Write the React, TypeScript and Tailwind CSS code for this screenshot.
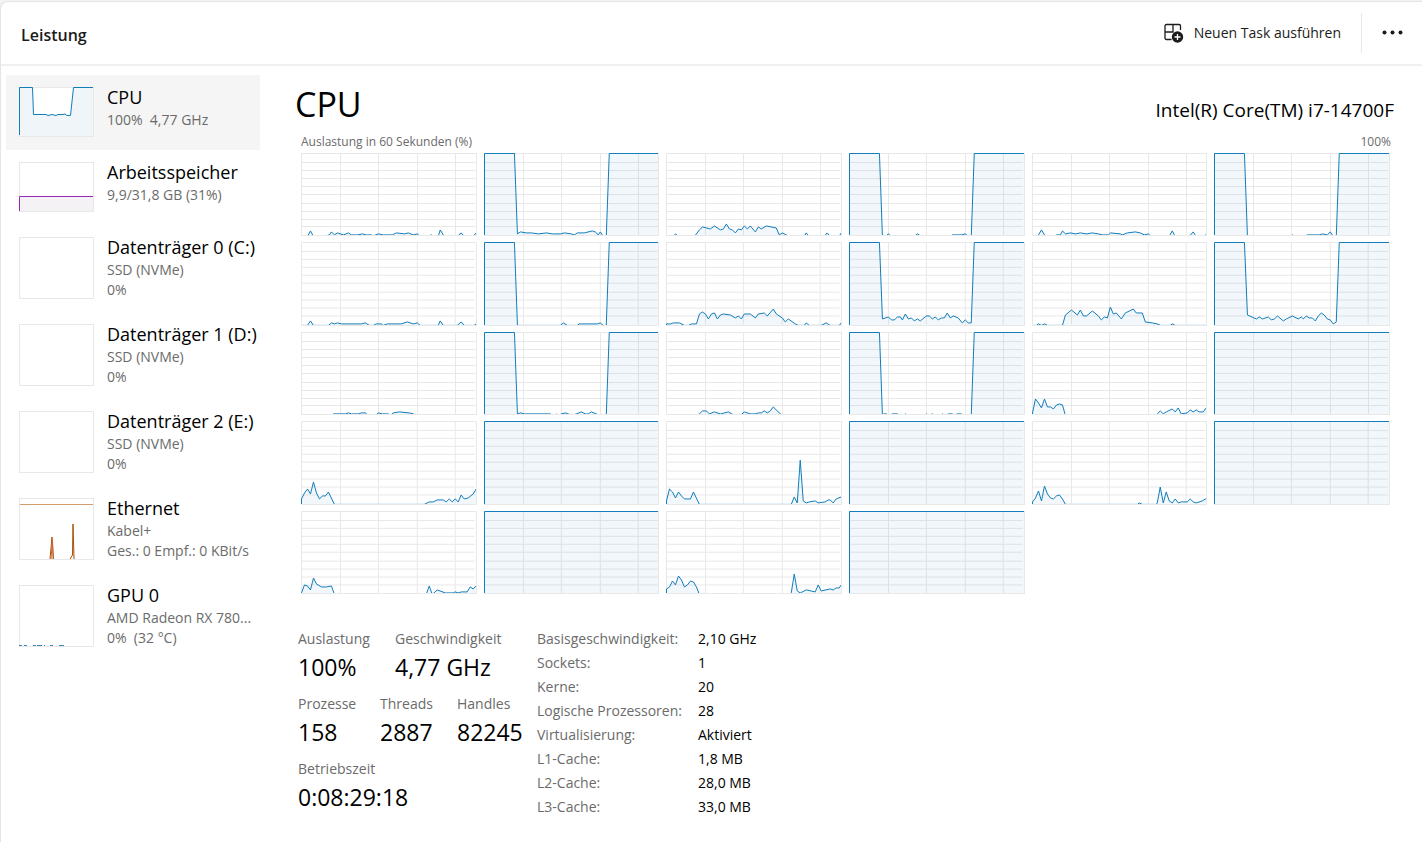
import clsx from "clsx";

// Each trace is a list of "x,height" pairs inside a 175 x 83 plot area
const FULL = "0,83 175,83";

const CORES = [
  "0,0 6,0 9,5 12,0 24,0 27,1 28,1 30,4 33,1 36,3 42,1 47,3 50,1 56,1 61,2 65,1 70,1 72,0 74,1 77,2 82,1 91,1 95,3 103,2 107,3 112,1 116,2 119,0 127,0 130,1 133,0 137,0 139,6 143,0 156,0 160,3 163,0 172,0 175,3",
  "0,83 30,83 33,2 36,4 42,3 47,3 54,2 62,3 68,2 76,2 80,3 87,2 90,1 93,3 100,3 108,5 111,4 114,1 116,4 119,0 122,0 125,83 175,83",
  "0,0 7,0 9,2 12,0 28,0 33,6 36,9 44,7 48,10 54,6 57,7 60,12 63,7 66,6 69,3 72,7 75,6 78,10 81,7 84,10 89,4 92,9 95,7 100,10 110,8 113,1 116,3 120,1 122,0 138,0 140,3 143,0 158,0 161,3 164,0 173,0 175,3",
  "0,83 30,83 33,0 36,0 39,2 42,0 65,0 68,2 72,0 101,0 103,1 112,1 116,2 119,0 122,0 125,83 175,83",
  "0,0 4,0 6,1 9,6 12,1 14,0 22,0 24,1 28,1 30,5 33,2 38,3 43,2 48,3 54,2 60,3 66,2 70,1 76,1 78,3 88,2 90,1 95,3 103,4 108,3 112,1 116,2 119,0 137,0 140,5 143,0 157,0 161,4 164,0 173,0 175,4",
  "0,83 30,83 33,0 76,0 78,1 81,0 90,0 93,1 105,1 108,2 113,1 116,4 119,0 122,0 125,83 175,83",

  "0,0 6,0 9,4 12,0 27,0 30,2 33,1 36,2 40,1 60,1 64,2 68,0 72,0 75,1 80,1 82,0 86,1 100,1 106,3 112,1 116,2 119,0 137,0 139,4 142,0 156,0 160,3 163,0 173,0 175,1",
  "0,83 30,83 33,0 76,0 79,2 83,0 93,0 95,1 113,1 116,2 119,0 122,0 125,83 175,83",
  "0,1 4,1 7,2 13,2 18,0 22,0 25,1 30,1 33,11 36,13 39,11 42,6 45,11 48,12 51,6 54,10 57,11 64,10 69,7 72,9 75,6 78,11 84,11 89,7 92,11 98,12 101,9 107,16 110,11 116,7 119,3 122,6 129,1 132,0 138,0 140,2 143,0 155,0 160,2 164,0 173,0 175,2",
  "0,83 30,83 33,6 39,8 42,5 45,5 48,8 51,8 53,5 56,11 59,6 62,7 65,4 68,6 71,4 77,9 80,9 83,6 86,8 89,5 92,7 95,7 98,12 101,7 104,9 109,7 113,2 116,5 119,2 122,2 125,83 175,83",
  "0,0 4,0 6,1 9,0 12,1 15,0 30,0 33,10 39,15 45,10 48,15 51,9 54,9 60,14 66,9 69,5 72,8 75,7 78,18 81,11 84,12 89,6 93,12 101,16 104,12 110,12 113,3 120,2 125,1 128,0 138,0 140,1 143,0 175,0",
  "0,83 30,83 33,10 42,6 45,8 48,6 54,8 57,5 60,6 63,9 69,4 72,6 78,9 84,6 87,8 89,6 92,9 95,7 98,7 101,4 104,9 107,12 110,10 113,6 116,5 119,1 122,3 125,83 175,83",

  "0,0 30,0 32,1 44,1 47,2 50,1 57,1 60,2 64,2 67,0 74,0 77,2 81,1 87,1 89,0 92,2 98,3 108,2 112,1 114,0 175,0",
  "0,83 30,83 33,1 36,2 40,1 66,1 68,0 71,0 72,1 74,0 77,1 81,2 88,0 92,1 97,3 101,1 104,1 107,3 112,1 114,0 122,0 125,83 175,83",
  "0,0 30,0 33,1 36,4 40,4 43,1 48,3 54,1 62,3 68,0 74,0 78,3 84,1 89,1 92,2 95,2 98,4 101,2 104,4 107,8 113,2 116,0 175,0",
  "0,83 30,83 33,0 34,1 37,1 40,0 43,1 48,1 50,0 54,0 56,1 59,0 75,0 77,1 80,0 83,1 86,0 91,0 93,1 96,0 99,1 103,1 105,0 108,1 112,1 114,0 122,0 125,83 175,83",
  "0,2 3,16 6,12 9,7 12,16 15,8 18,8 21,6 24,10 27,11 30,10 33,0 123,0 125,1 128,4 131,1 134,3 140,6 143,3 146,7 149,1 155,2 158,5 161,3 164,5 167,3 171,3 174,7 175,8",
  FULL,

  "0,5 3,11 6,15 9,10 12,22 15,11 18,5 21,8 24,8 27,12 33,0 123,0 128,2 132,2 136,4 142,4 145,2 148,5 151,2 154,5 157,2 160,9 163,5 167,6 172,10 175,15",
  FULL,
  "0,3 3,15 6,12 9,6 12,12 15,8 18,5 24,5 27,12 33,0 125,0 128,7 131,1 134,44 137,3 140,1 143,2 149,3 152,1 159,2 162,4 164,4 167,1 170,5 175,7",
  FULL,
  "0,2 3,6 6,13 9,3 12,18 15,10 18,6 21,5 24,8 27,9 30,5 33,0 105,0 107,1 110,0 124,0 125,1 128,17 131,1 134,12 137,3 140,1 143,5 146,1 149,2 155,2 158,5 161,2 164,1 170,3 175,6",
  FULL,

  "0,1 3,9 6,8 9,4 12,16 15,10 20,7 25,7 30,8 33,0 125,0 128,8 131,0 136,4 144,1 152,1 154,2 157,1 160,2 166,2 169,7 172,5 175,8",
  FULL,
  "0,5 3,7 6,13 9,9 12,18 15,14 18,7 21,9 24,13 27,12 30,7 33,0 124,0 125,1 128,20 131,3 134,1 140,4 149,2 152,9 155,3 164,5 167,4 170,6 173,6 175,9",
  FULL,
];

const GRID_X = [39, 77, 116, 154];
const GRID_Y = [9, 17, 25, 33, 41, 50, 58, 66, 74];

function tracePoints(trace: string, height: number) {
  return trace
    .split(" ")
    .map((pair) => {
      const [x, h] = pair.split(",").map(Number);
      // idle samples fall just below the visible area
      const y = h === 0 ? height + 1 : height + 0.5 - h;
      return `${x + 0.5},${y}`;
    })
    .join(" ");
}

function CoreChart({ trace, index }: { trace: string; index: number }) {
  const points = tracePoints(trace, 83);
  return (
    <div className="min-h-0 border-r border-b border-[#e8e8e8]">
      <svg
        className="block h-full w-full"
        viewBox="0 0 175 83"
        preserveAspectRatio="none"
        role="img"
        aria-label={`CPU ${index}`}
      >
        <g stroke="#e8e8e8" shapeRendering="crispEdges">
          <path d="M0.5 83V0.5H175" fill="none" vectorEffect="non-scaling-stroke" />
          {GRID_X.map((x) => (
            <line key={x} x1={x + 0.5} x2={x + 0.5} y1="0" y2="83" vectorEffect="non-scaling-stroke" />
          ))}
          {GRID_Y.map((y) => (
            <line key={y} x1="0" x2="174" y1={y + 0.5} y2={y + 0.5} vectorEffect="non-scaling-stroke" />
          ))}
        </g>
        <polygon points={`0.5,84 ${points} 175.5,84`} fill="#117dbb" fillOpacity="0.06" />
        <polyline
          points={`0.5,84 ${points}`}
          fill="none"
          stroke="#117dbb"
          strokeWidth="1"
          vectorEffect="non-scaling-stroke"
        />
      </svg>
    </div>
  );
}

function CpuThumb() {
  const points = "0.5,48 0.5,0.5 13.5,0.5 14.5,27.5 27,27.5 29,28.5 33,27.5 37,28.5 39,27.5 44,27.5 46,27 48,28.5 51.5,28.5 54.5,0.5 74,0.5";
  return (
    <svg className="block h-full w-full" viewBox="0 0 74 49">
      <polygon points={`${points} 74,49 0.5,49`} fill="#f0f5fa" />
      <polyline points={points} fill="none" stroke="#117dbb" />
    </svg>
  );
}

function MemoryThumb() {
  return (
    <svg className="block h-full w-full" viewBox="0 0 74 49">
      <rect x="0" y="34" width="74" height="15" fill="#f4f2f4" />
      <path d="M0.5 49V34.5H74" fill="none" stroke="#9528b4" />
    </svg>
  );
}

function EthernetThumb() {
  return (
    <svg className="block h-full w-full" viewBox="0 0 74 61" fill="none">
      <path d="M1 6.5H74" stroke="#d39c6a" />
      <path d="M31 61L33 39L34.5 61M51 61L53.5 57L54 26L55 61" stroke="#a74f01" />
      <path d="M32 61L33.5 41L34 61" stroke="#d0662f" />
    </svg>
  );
}

function GpuThumb() {
  return (
    <svg className="block h-full w-full" viewBox="0 0 74 61">
      <path
        d="M0 60.5H3M5 60.5H8M14 60.5H17M18 60.5H23M25 60.5H26M31 60.5H34M40 60.5H45"
        stroke="#3a88b5"
      />
    </svg>
  );
}

const DEVICES = [
  { name: "CPU", lines: ["100%  4,77 GHz"], thumb: <CpuThumb />, active: true },
  { name: "Arbeitsspeicher", lines: ["9,9/31,8 GB (31%)"], thumb: <MemoryThumb /> },
  { name: "Datenträger 0 (C:)", lines: ["SSD (NVMe)", "0%"] },
  { name: "Datenträger 1 (D:)", lines: ["SSD (NVMe)", "0%"] },
  { name: "Datenträger 2 (E:)", lines: ["SSD (NVMe)", "0%"] },
  { name: "Ethernet", lines: ["Kabel+", "Ges.: 0 Empf.: 0 KBit/s"], thumb: <EthernetThumb /> },
  { name: "GPU 0", lines: ["AMD Radeon RX 780...", "0%  (32 °C)"], thumb: <GpuThumb /> },
];

const STATS = [
  [
    { label: "Auslastung", value: "100%", width: "w-[97px]" },
    { label: "Geschwindigkeit", value: "4,77 GHz", width: "w-[142px]" },
  ],
  [
    { label: "Prozesse", value: "158", width: "w-[82px]" },
    { label: "Threads", value: "2887", width: "w-[77px]" },
    { label: "Handles", value: "82245", width: "w-[80px]" },
  ],
  [{ label: "Betriebszeit", value: "0:08:29:18", width: "w-[239px]" }],
];

const SPECS = [
  ["Basisgeschwindigkeit:", "2,10 GHz"],
  ["Sockets:", "1"],
  ["Kerne:", "20"],
  ["Logische Prozessoren:", "28"],
  ["Virtualisierung:", "Aktiviert"],
  ["L1-Cache:", "1,8 MB"],
  ["L2-Cache:", "28,0 MB"],
  ["L3-Cache:", "33,0 MB"],
];

function NewTaskIcon() {
  return (
    <svg className="h-5 w-5" viewBox="0 0 20 20" fill="none" aria-hidden="true">
      <path
        d="M7.5 16.5H2.500A1.500 1.500 0 0 1 1 15V3A1.500 1.500 0 0 1 2.500 1.500H15A1.500 1.500 0 0 1 16.500 3V7M9 1.500V9H1"
        stroke="#1b1b1b"
        strokeWidth="1.3"
      />
      <circle cx="13.5" cy="14" r="5.7" fill="#1b1b1b" />
      <path d="M13.5 11V17M10.5 14H16.5" stroke="#fff" strokeWidth="1.3" />
    </svg>
  );
}

export default function App() {
  return (
    <div className="min-h-screen bg-[#f3f3f3] pt-px font-['Open_Sans','Noto_Sans',sans-serif] text-black">
      <div className="min-h-[calc(100vh-1px)] rounded-tl-lg border-t border-l border-[#e5e5e5] bg-white">
        <header className="flex h-16 items-center border-b-2 border-[#f0f0f0] pr-4 pl-5">
          <h1 className="flex-1 pt-1 text-base font-semibold text-[#1b1b1b]">Leistung</h1>
          <button className="flex items-center gap-2.5 pr-5 text-sm text-[#1b1b1b]">
            <NewTaskIcon />
            Neuen Task ausführen
          </button>
          <button className="flex h-10 items-center border-l border-[#e9e9e9] pl-5" aria-label="Weitere Optionen">
            <svg className="h-6 w-6" viewBox="0 0 24 24" fill="#1b1b1b">
              <circle cx="2.5" cy="11.5" r="2" />
              <circle cx="10.5" cy="11.5" r="2" />
              <circle cx="18.5" cy="11.5" r="2" />
            </svg>
          </button>
        </header>

        <div className="flex">
          <nav className="w-[259px] shrink-0 pt-[9px] pl-[5px]">
            {DEVICES.map((d) => (
              <button
                key={d.name}
                className={clsx(
                  "flex w-full gap-[13px] pt-3 pb-[13px] pl-[13px] text-left whitespace-nowrap",
                  d.active && "bg-[#f5f5f5]"
                )}
              >
                <span
                  className={clsx(
                    "w-[75px] shrink-0 border-r border-b border-[#e8e8e8] bg-white shadow-[inset_1px_1px_0_#e8e8e8]",
                    d.lines.length > 1 ? "h-[62px]" : "h-[50px]"
                  )}
                >
                  {d.thumb}
                </span>
                <span className="-mt-[3px] flex h-0 flex-col">
                  <span className="text-lg leading-[26px]">{d.name}</span>
                  {d.lines.map((line) => (
                    <span key={line} className="text-sm leading-5 whitespace-pre text-[#6b6b6b]">
                      {line}
                    </span>
                  ))}
                </span>
              </button>
            ))}
          </nav>

          <main className="min-w-0 flex-1 pt-[15px] pr-7 pl-[35px]">
            <div className="flex h-12 items-center justify-between">
              <h2 className="pb-0.5 text-[34px] leading-[46px]">CPU</h2>
              <p className="pt-2.5 text-[19px]">Intel(R) Core(TM) i7-14700F</p>
            </div>
            <div className="flex justify-between pt-0.5 pr-[3px] pl-1.5 text-xs leading-[22px] text-[#6b6b6b]">
              <span>Auslastung in 60 Sekunden (%)</span>
              <span>100%</span>
            </div>
            <div className="mr-1 ml-1.5 grid h-[441px] grid-cols-6 grid-rows-5 gap-x-[7px] gap-y-1.5">
              {CORES.map((trace, i) => (
                <CoreChart key={i} trace={trace} index={i} />
              ))}
            </div>

            <div className="mt-[33px] flex pl-[3px]">
              <div className="flex flex-col gap-[9px]">
                {STATS.map((row, i) => (
                  <dl key={i} className="flex">
                    {row.map((s) => (
                      <div key={s.label} className={s.width}>
                        <dt className="text-sm leading-6 text-[#6b6b6b]">{s.label}</dt>
                        <dd className="text-[23px] leading-8">{s.value}</dd>
                      </div>
                    ))}
                  </dl>
                ))}
              </div>
              <table className="self-start text-left text-sm leading-6 whitespace-nowrap">
                <tbody>
                  {SPECS.map(([label, value]) => (
                    <tr key={label}>
                      <th className="w-[161px] p-0 font-normal text-[#6b6b6b]">{label}</th>
                      <td className="p-0">{value}</td>
                    </tr>
                  ))}
                </tbody>
              </table>
            </div>
          </main>
        </div>
      </div>
    </div>
  );
}
